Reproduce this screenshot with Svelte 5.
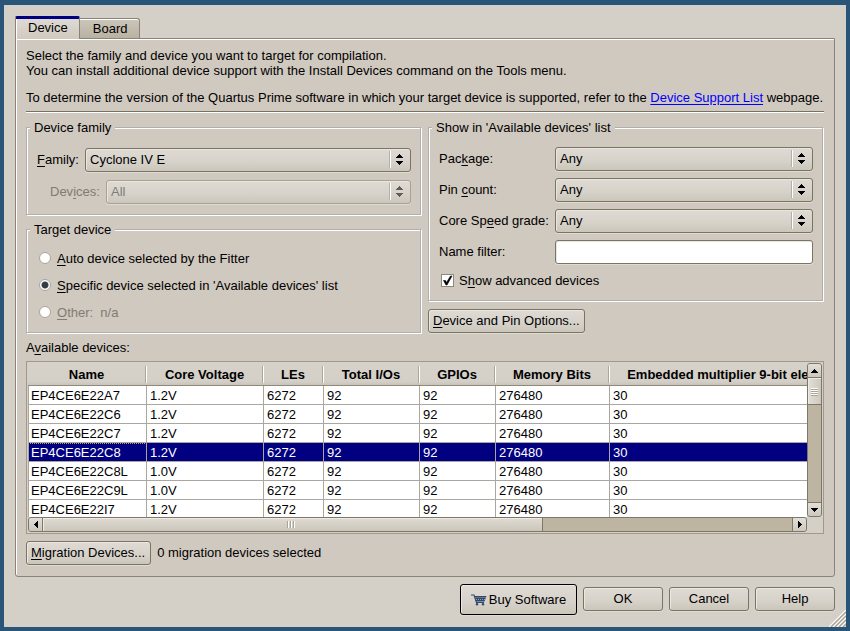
<script>
  const columns = [
    { title: 'Name', width: 119 },
    { title: 'Core Voltage', width: 117 },
    { title: 'LEs', width: 60 },
    { title: 'Total I/Os', width: 96 },
    { title: 'GPIOs', width: 76 },
    { title: 'Memory Bits', width: 114 },
    { title: 'Embedded multiplier 9-bit elements', width: 256 }
  ];
  const devices = [
    ['EP4CE6E22A7', '1.2V', '6272', '92', '92', '276480', '30'],
    ['EP4CE6E22C6', '1.2V', '6272', '92', '92', '276480', '30'],
    ['EP4CE6E22C7', '1.2V', '6272', '92', '92', '276480', '30'],
    ['EP4CE6E22C8', '1.2V', '6272', '92', '92', '276480', '30'],
    ['EP4CE6E22C8L', '1.0V', '6272', '92', '92', '276480', '30'],
    ['EP4CE6E22C9L', '1.0V', '6272', '92', '92', '276480', '30'],
    ['EP4CE6E22I7', '1.2V', '6272', '92', '92', '276480', '30']
  ];
  let selected = $state('EP4CE6E22C8');
  let target = $state('specific');
  let advanced = $state(true);
  let nameFilter = $state('');
</script>

{#snippet combo(id, value, disabled)}
  <span class="combo" class:disabled>
    <select {id} {disabled}><option>{value}</option></select>
    <svg width="24" height="24" viewBox="0 0 24 24" shape-rendering="crispEdges" aria-hidden="true">
      <path d="M2 3h1v17H2z" fill="#b5afa5" />
      <path d="M3 3h1v17H3z" fill="#fff" />
      <path class="arrows" d="M12 6h1v1h1v1h1v1h1v1H9V9h1V8h1V7h1zM9 13h7v1h-1v1h-1v1h-1v1h-1v-1h-1v-1h-1v-1H9z" />
    </svg>
  </span>
{/snippet}

<main class="window">
  <div class="tabs" role="tablist">
    <button class="tab active" role="tab" aria-selected="true">Device</button>
    <button class="tab" role="tab" aria-selected="false">Board</button>
  </div>

  <section class="pane">
    <p>Select the family and device you want to target for compilation.<br />You can install additional device support with the Install Devices command on the Tools menu.</p>
    <p class="support">To determine the version of the Quartus Prime software in which your target device is supported, refer to the <a href="#support">Device Support List</a> webpage.</p>
    <hr />

    <div class="groups">
      <div class="column">
        <fieldset class="family">
          <legend>Device family</legend>
          <div class="row">
            <label class="family-label" for="family"><u>F</u>amily:</label>
            {@render combo('family', 'Cyclone IV E', false)}
          </div>
          <div class="row sub">
            <label class="devices-label" for="devices">Dev<u>i</u>ces:</label>
            {@render combo('devices', 'All', true)}
          </div>
        </fieldset>
        <fieldset class="target">
          <legend>Target device</legend>
          <label><input type="radio" name="target" value="auto" bind:group={target} /><span><u>A</u>uto device selected by the Fitter</span></label>
          <label><input type="radio" name="target" value="specific" bind:group={target} /><span><u>S</u>pecific device selected in 'Available devices' list</span></label>
          <label class="dim"><input type="radio" name="target" value="other" disabled bind:group={target} /><span><u>O</u>ther:&nbsp; n/a</span></label>
        </fieldset>
      </div>

      <div class="column right">
        <fieldset class="filters">
          <legend>Show in 'Available devices' list</legend>
          <div class="row">
            <label for="package">Pac<u>k</u>age:</label>
            {@render combo('package', 'Any', false)}
          </div>
          <div class="row">
            <label for="pins">Pin <u>c</u>ount:</label>
            {@render combo('pins', 'Any', false)}
          </div>
          <div class="row">
            <label for="speed">Core Sp<u>e</u>ed grade:</label>
            {@render combo('speed', 'Any', false)}
          </div>
          <div class="row">
            <label for="filter">Name filter:</label>
            <input id="filter" class="text" type="text" bind:value={nameFilter} />
          </div>
          <label class="check">
            <span class="box">
              <input type="checkbox" bind:checked={advanced} />
              {#if advanced}
                <svg width="13" height="13" viewBox="0 0 13 13" aria-hidden="true"><path d="M2.5 6.5h2L5.500 8.500 9.500 2h1.500L6 11H5z" fill="#000" stroke="#000" stroke-width=".6" /></svg>
              {/if}
            </span>
            <span>S<u>h</u>ow advanced devices</span>
          </label>
        </fieldset>
        <button class="btn options"><u>D</u>evice and Pin Options...</button>
      </div>
    </div>

    <div class="caption" id="available">A<u>v</u>ailable devices:</div>

    <div class="list">
      <div class="viewport">
        <table aria-labelledby="available">
          <colgroup>
            {#each columns as c}<col style="width: {c.width}px" />{/each}
          </colgroup>
          <thead>
            <tr>{#each columns as c}<th>{c.title}</th>{/each}</tr>
          </thead>
          <tbody>
            {#each devices as d}
              <tr class:selected={d[0] === selected} onclick={() => (selected = d[0])}>
                {#each d as cell}<td>{cell}</td>{/each}
              </tr>
            {/each}
          </tbody>
        </table>
      </div>
      <div class="bar vertical">
        <button aria-label="Scroll up"><svg width="7" height="4" viewBox="0 0 7 4" shape-rendering="crispEdges"><path d="M3 0h1v1h1v1h1v1h1v1H0V3h1V2h1V1h1z" /></svg></button>
        <div class="thumb"><i></i><i></i><i></i><i></i></div>
        <div class="track"></div>
        <button aria-label="Scroll down"><svg width="7" height="4" viewBox="0 0 7 4" shape-rendering="crispEdges"><path d="M0 0h7v1H6v1H5v1H4v1H3V3H2V2H1V1H0z" /></svg></button>
      </div>
      <div class="bar horizontal">
        <button aria-label="Scroll left"><svg width="4" height="7" viewBox="0 0 4 7" shape-rendering="crispEdges"><path d="M4 0v7H3V6H2V5H1V4H0V3h1V2h1V1h1V0z" /></svg></button>
        <div class="thumb"><i></i><i></i><i></i></div>
        <div class="track"></div>
        <button aria-label="Scroll right"><svg width="4" height="7" viewBox="0 0 4 7" shape-rendering="crispEdges"><path d="M0 0h1v1h1v1h1v1h1v1H3v1H2v1H1v1H0z" /></svg></button>
      </div>
    </div>

    <div class="migration">
      <button class="btn"><u>M</u>igration Devices...</button>
      <span>0 migration devices selected</span>
    </div>
  </section>

  <footer>
    <button class="btn buy">
      <svg width="16" height="12" viewBox="0 0 16 12" aria-hidden="true">
        <path d="M0 1h3l2.500 7.500H13" fill="none" stroke="#2f4a6b" stroke-width="1.200" />
        <path d="M3.500 2H15.500L13.500 7.500H5z" fill="#2f4a6b" />
        <path d="M4.500 3.500h10.500M5 5.500h9" stroke="#b5bcc4" stroke-width=".8" stroke-dasharray="1 1" />
        <circle cx="6" cy="10.300" r="1.200" fill="#2f4a6b" />
        <circle cx="12" cy="10.300" r="1.200" fill="#2f4a6b" />
      </svg>
      Buy Software
    </button>
    <button class="btn">OK</button>
    <button class="btn">Cancel</button>
    <button class="btn">Help</button>
  </footer>
  <svg class="grip" width="17" height="17" viewBox="0 0 17 17" aria-hidden="true">
    <path d="M0 17L17 0M4 17L17 4M8 17L17 8M12 17L17 12" stroke="#fff" stroke-width="1.200" />
    <path d="M2 17L17 2M6 17L17 6M10 17L17 10M14 17L17 14" stroke="#a8a292" stroke-width="1.200" />
  </svg>
</main>

<style>
  .window, .window * { box-sizing: border-box; }
  .window {
    position: relative;
    display: flex;
    flex-direction: column;
    min-height: 100vh;
    padding: 11px 11px 12px;
    border: solid #285578;
    border-width: 5px 4px 4px;
    background: #d4d0c8;
    color: #000;
    font: 13px/15px "Liberation Sans", Arial, sans-serif;
  }
  button, select, input { font: inherit; color: inherit; margin: 0; }
  p, fieldset, legend { margin: 0; padding: 0; }
  u { text-decoration: underline 1px; text-underline-offset: 2px; text-decoration-skip-ink: none; }

  .tabs { display: flex; align-items: flex-end; height: 22px; }
  .tab {
    height: 20px;
    padding: 0 12px 0 13px;
    border: 1px solid #8a8476;
    border-left: 0;
    border-bottom: 0;
    border-radius: 0 3px 0 0;
    background: linear-gradient(#cbc6ba, #b9b2a3);
    box-shadow: inset 0 1px #fff;
  }
  .tab.active {
    position: relative;
    height: 23px;
    margin-bottom: -1px;
    padding: 0 11px 4px 12px;
    border-left: 1px solid #8a8476;
    border-top: 3px solid #000080;
    border-radius: 2px 2px 0 0;
    background: linear-gradient(#dedad3, #d0c9bf);
    box-shadow: inset 1px 0 #fff;
  }
  .pane {
    flex: 1;
    display: flex;
    flex-direction: column;
    padding: 9px 10px 11px;
    border: 1px solid #8a8476;
    border-radius: 0 0 3px 3px;
    background: #d0c9bf;
    box-shadow: inset 1px 1px #fff;
  }
  .support { margin-top: 12px; }
  a { color: #00f; text-underline-offset: 2px; }
  hr { width: 100%; height: 2px; margin: 6px 0 7px; border: 0; border-top: 1px solid #77715f; background: #fff; }

  .groups { display: flex; gap: 7px; padding-right: 1px; }
  .column { flex: 1 1 0; min-width: 0; display: flex; flex-direction: column; gap: 7px; }
  .column.right { gap: 8px; }
  fieldset {
    min-width: 0;
    border: 1px solid #b0aeb0;
    box-shadow: 1px 1px #fff, inset 1px 1px #fff;
  }
  legend { margin-left: -7px; padding: 0 4px; background: #d0c9bf; }
  .family { padding: 13px 9px 10px 10px; }
  .target { padding: 7px 9px 7px 10px; }
  .filters { padding: 12px 9px 12px 10px; }
  .row { display: flex; align-items: center; }
  .row label { padding-bottom: 1px; }
  .family-label { flex: 0 0 48px; }
  .devices-label { flex: 0 0 56px; color: #807b73; }
  .sub { margin-top: 8px; padding-left: 13px; }
  .filters .row { margin-bottom: 7px; }
  .filters .row label { flex: 0 0 116px; }

  .combo { flex: 1; display: grid; min-width: 0; }
  .combo > * { grid-area: 1 / 1; }
  .combo svg { justify-self: end; pointer-events: none; }
  .arrows { fill: #000; }
  select, .text {
    width: 100%;
    height: 24px;
    padding: 0 24px 1px 4px;
    border: 1px solid #7a7464;
    border-radius: 3px;
    outline: 0;
    appearance: none;
    background: linear-gradient(#dfdbd4, #d6d2ca 60%, #cbc6ba);
    box-shadow: inset 1px 1px #e9e6e0, 0 1px #e0dcd4;
  }
  .text { flex: 1; min-width: 0; background: #fff; }
  .disabled select { color: #807b73; border-color: #a8a294; opacity: 1; }
  .disabled .arrows { fill: #625e56; }

  .target label { display: flex; align-items: center; gap: 6px; height: 27px; padding-left: 2px; }
  .target label span { padding-top: 2px; }
  .target .dim { color: #807b73; }
  input[type='radio'] {
    width: 12px;
    height: 12px;
    border: 1px solid #aaa49a;
    border-radius: 50%;
    appearance: none;
    background: #fff;
  }
  input[type='radio']:checked { background: radial-gradient(circle at 5px 5px, #333c40 0 2px, #39434a 3px, #fff 4px); }
  .check { display: flex; align-items: center; gap: 5px; margin: 9px 0 0 2px; }
  .filters .row:nth-last-child(2) { margin-bottom: 0; }
  .box { display: grid; }
  .box > * { grid-area: 1 / 1; pointer-events: none; }
  .box input { width: 13px; height: 13px; border: 1px solid #8f897b; appearance: none; background: #fff; }

  .btn {
    height: 24px;
    padding: 0 4px 1px;
    border: 1px solid #7a7464;
    border-radius: 3px;
    background: linear-gradient(#dfdbd4, #d6d2ca 60%, #cbc6ba);
    box-shadow: inset 1px 1px #ebe8e2, 0 1px #e0dcd4;
    white-space: nowrap;
  }
  .options { align-self: flex-start; }
  .caption { margin: 7px 0 6px; }

  .list {
    flex: 1 1 173px;
    display: grid;
    grid-template: minmax(0, 1fr) 15px / minmax(0, 1fr) 15px;
    padding: 0 1px 1px;
    border: 1px solid #a09a8c;
    background: #d4d0c8;
  }
  .viewport { height: 0; min-height: 100%; overflow: hidden; }
  table { width: 838px; table-layout: fixed; border-collapse: separate; border-spacing: 0; }
  th {
    height: 24px;
    padding: 2px 2px 0 0;
    border-bottom: 1px solid #8f897b;
    background: linear-gradient(90deg, #aca698 1px, #fff 1px) right 4px / 2px 17px no-repeat;
    white-space: nowrap;
  }
  thead tr { background: linear-gradient(#d6d2ca, #d4d0c8 80%, #c8c2b7); }
  td { height: 19px; padding: 0 3px; border: solid #aaa6a0; border-width: 0 1px 1px 0; background: #fff; white-space: nowrap; }
  td:first-child { padding-left: 2px; border-left-width: 1px; }
  .selected td { background: #000080; color: #fff; }
  .selected td:first-child { outline: 1px dotted #a9a476; outline-offset: -1px; }

  .bar { display: flex; background: #bdb4a2; border: 1px solid #7d7768; border-radius: 3px; overflow: hidden; }
  .bar button {
    display: grid;
    place-items: center;
    flex: 0 0 13px;
    padding: 0;
    border: 0;
    background: linear-gradient(#e2dfd9, #cdc8be);
  }
  .thumb { display: flex; align-items: center; justify-content: center; gap: 1px; border: solid #7d7768; box-shadow: inset 1px 1px #eeebe5; }
  .vertical { flex-direction: column; margin-top: 1px; }
  .vertical .thumb { flex: 0 0 28px; flex-direction: column; border-width: 1px 0; background: linear-gradient(90deg, #e2dfd9, #cdc8be); }
  .vertical .thumb i { width: 7px; height: 1px; background: #fff; box-shadow: 0 1px #aaa395; }
  .vertical .track, .horizontal .track { flex: 1; }
  .vertical button:last-child { border-top: 1px solid #7d7768; flex-basis: 14px; }
  .horizontal .thumb { flex: 2 1 0; border-width: 0 1px; background: linear-gradient(#dfdbd4, #cbc6ba); }
  .horizontal .thumb i { width: 1px; height: 7px; margin-right: 1px; background: #fff; box-shadow: -1px 0 #aaa395; }
  .horizontal button:last-child { border-left: 1px solid #7d7768; flex-basis: 14px; }

  .migration { display: flex; align-items: center; gap: 6px; margin-top: 7px; }
  .migration .btn { padding-right: 5px; }
  .migration span { padding-bottom: 1px; }
  footer { display: flex; justify-content: flex-end; align-items: flex-start; gap: 6px; margin-top: 7px; }
  footer .btn { width: 80px; margin-top: 3px; }
  footer .buy {
    display: flex;
    align-items: center;
    justify-content: center;
    gap: 2px;
    width: 117px;
    height: 31px;
    margin-top: 0;
    padding-bottom: 0;
    border-color: #000;
  }
  .grip { position: absolute; right: 0; bottom: 0; }
</style>
